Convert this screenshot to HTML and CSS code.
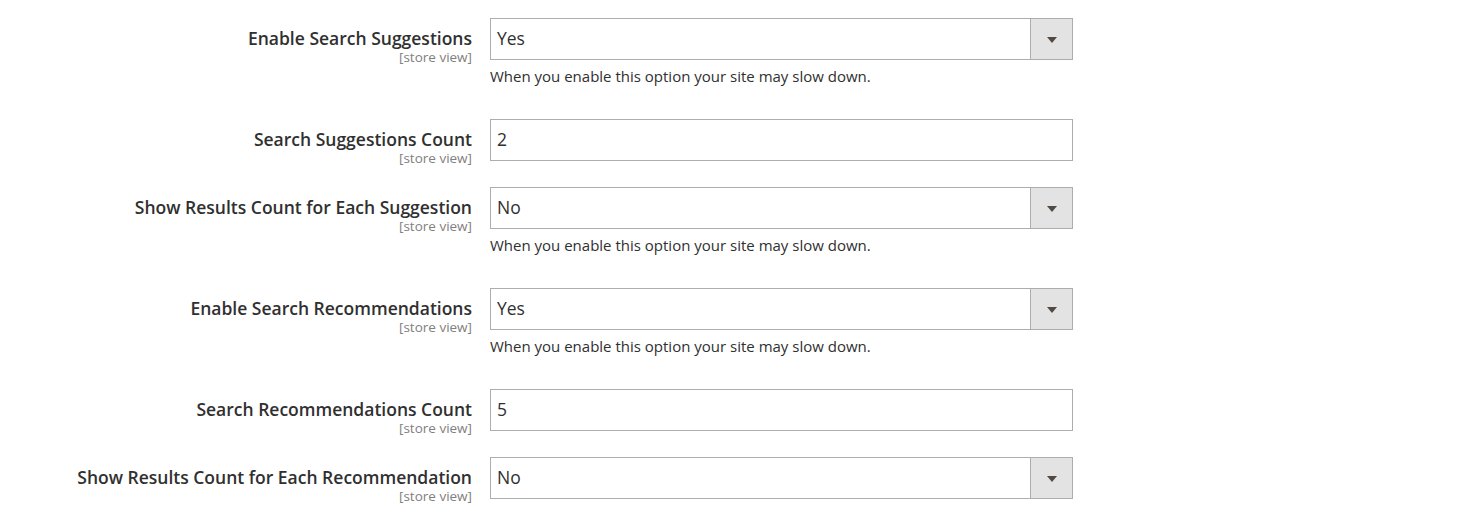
FILE: index.html
```html
<!DOCTYPE html>
<html lang="en">
<head>
<meta charset="utf-8">
<title>Search Suggestions</title>
<link rel="stylesheet" href="styles.css">
</head>
<body>
<div class="form">
  <div class="row">
    <div class="label"><span class="title">Enable Search Suggestions</span><span class="scope">[store view]</span></div>
    <div class="control">
      <div class="select"><span class="value">Yes</span><span class="btn"><span class="arrow"></span></span></div>
      <p class="note">When you enable this option your site may slow down.</p>
    </div>
  </div>
  <div class="row">
    <div class="label"><span class="title">Search Suggestions Count</span><span class="scope">[store view]</span></div>
    <div class="control">
      <div class="input"><span class="value">2</span></div>
    </div>
  </div>
  <div class="row">
    <div class="label"><span class="title">Show Results Count for Each Suggestion</span><span class="scope">[store view]</span></div>
    <div class="control">
      <div class="select"><span class="value">No</span><span class="btn"><span class="arrow"></span></span></div>
      <p class="note">When you enable this option your site may slow down.</p>
    </div>
  </div>
  <div class="row">
    <div class="label"><span class="title">Enable Search Recommendations</span><span class="scope">[store view]</span></div>
    <div class="control">
      <div class="select"><span class="value">Yes</span><span class="btn"><span class="arrow"></span></span></div>
      <p class="note">When you enable this option your site may slow down.</p>
    </div>
  </div>
  <div class="row">
    <div class="label"><span class="title">Search Recommendations Count</span><span class="scope">[store view]</span></div>
    <div class="control">
      <div class="input"><span class="value">5</span></div>
    </div>
  </div>
  <div class="row">
    <div class="label"><span class="title">Show Results Count for Each Recommendation</span><span class="scope">[store view]</span></div>
    <div class="control">
      <div class="select"><span class="value">No</span><span class="btn"><span class="arrow"></span></span></div>
    </div>
  </div>
</div>
</body>
</html>
```
FILE: styles.css
```css
html, body {
  margin: 0;
  padding: 0;
  background: #ffffff;
}
body {
  font-family: "Open Sans", "Noto Sans", sans-serif;
  color: #303030;
}
.form {
  padding-top: 18px;
}
.row {
  display: grid;
  grid-template-columns: 472px 583px;
  column-gap: 18px;
  margin-bottom: 26px;
}
.label {
  box-sizing: border-box;
  height: 42px;
  display: flex;
  flex-direction: column;
  align-items: flex-end;
  text-align: right;
  padding-top: 8px;
}
.title {
  font-size: 17.5px;
  font-weight: 600;
  line-height: 24px;
  color: #303030;
  white-space: nowrap;
}
.scope {
  font-size: 13.5px;
  line-height: 15px;
  color: #808080;
  white-space: nowrap;
}
.control {
  display: flex;
  flex-direction: column;
}
.select, .input {
  box-sizing: border-box;
  height: 42px;
  border: 1px solid #adadad;
  display: flex;
  align-items: stretch;
  background: #fff;
}
.value {
  flex: 1;
  display: flex;
  align-items: center;
  padding-left: 6px;
  padding-bottom: 2px;
  font-size: 17.5px;
  color: #303030;
}
.btn {
  box-sizing: border-box;
  width: 42px;
  background: #e3e3e3;
  border-left: 1px solid #adadad;
  display: flex;
  align-items: center;
  justify-content: center;
}
.arrow {
  width: 0;
  height: 0;
  border-left: 5px solid transparent;
  border-right: 5px solid transparent;
  border-top: 6px solid #514943;
  margin-top: 1px;
}
.note {
  margin: 6px 0 7px;
  font-size: 15px;
  line-height: 20px;
  color: #303030;
}
```
